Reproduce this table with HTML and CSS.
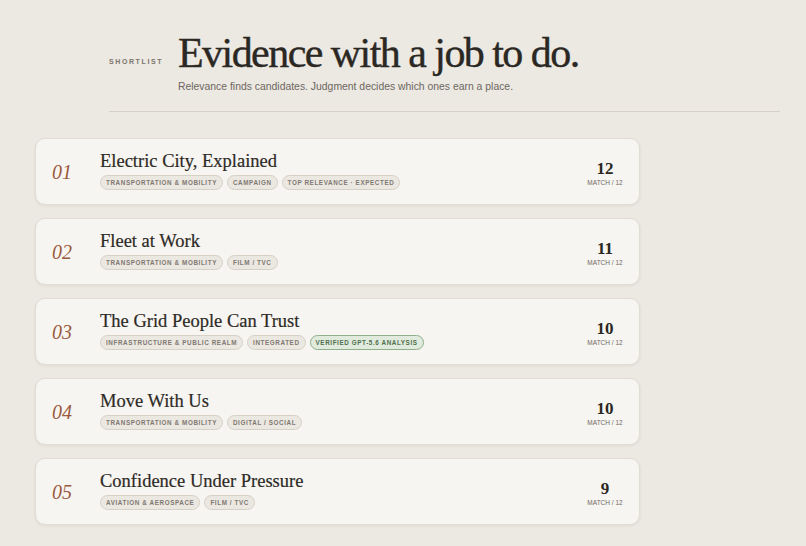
FILE: index.html
```html
<!DOCTYPE html>
<html>
<head>
<meta charset="utf-8">
<link rel="stylesheet" href="styles.css">
</head>
<body>
<main class="page">
  <header class="masthead">
    <div class="masthead-row">
      <span class="eyebrow">Shortlist</span>
      <div class="masthead-text">
        <h1 class="headline">Evidence with a job to do.</h1>
        <p class="dek">Relevance finds candidates. Judgment decides which ones earn a place.</p>
      </div>
    </div>
    <hr class="rule">
  </header>

  <ol class="shortlist">
    <li class="card">
      <span class="rank">01</span>
      <div class="card-body">
        <h2 class="card-title">Electric City, Explained</h2>
        <div class="tags">
          <span class="tag">Transportation &amp; Mobility</span>
          <span class="tag">Campaign</span>
          <span class="tag">Top relevance · expected</span>
        </div>
      </div>
      <div class="score"><span class="score-num">12</span><span class="score-label">Match / 12</span></div>
    </li>
    <li class="card">
      <span class="rank">02</span>
      <div class="card-body">
        <h2 class="card-title">Fleet at Work</h2>
        <div class="tags">
          <span class="tag">Transportation &amp; Mobility</span>
          <span class="tag">Film / TVC</span>
        </div>
      </div>
      <div class="score"><span class="score-num">11</span><span class="score-label">Match / 12</span></div>
    </li>
    <li class="card">
      <span class="rank">03</span>
      <div class="card-body">
        <h2 class="card-title">The Grid People Can Trust</h2>
        <div class="tags">
          <span class="tag">Infrastructure &amp; Public Realm</span>
          <span class="tag">Integrated</span>
          <span class="tag tag-verified">Verified GPT-5.6 analysis</span>
        </div>
      </div>
      <div class="score"><span class="score-num">10</span><span class="score-label">Match / 12</span></div>
    </li>
    <li class="card">
      <span class="rank">04</span>
      <div class="card-body">
        <h2 class="card-title">Move With Us</h2>
        <div class="tags">
          <span class="tag">Transportation &amp; Mobility</span>
          <span class="tag">Digital / Social</span>
        </div>
      </div>
      <div class="score"><span class="score-num">10</span><span class="score-label">Match / 12</span></div>
    </li>
    <li class="card">
      <span class="rank">05</span>
      <div class="card-body">
        <h2 class="card-title">Confidence Under Pressure</h2>
        <div class="tags">
          <span class="tag">Aviation &amp; Aerospace</span>
          <span class="tag">Film / TVC</span>
        </div>
      </div>
      <div class="score"><span class="score-num">9</span><span class="score-label">Match / 12</span></div>
    </li>
  </ol>
</main>
</body>
</html>
```

FILE: styles.css
```css
* { box-sizing: border-box; }

html, body {
  margin: 0;
  padding: 0;
  background: #ece8e2;
  height: 100%;
}

body {
  font-family: "Liberation Sans", Arial, sans-serif;
  color: #2b2824;
  overflow: hidden;
}

.page {
  padding: 30px 26px 0 35px;
}

.masthead {
  padding-left: 74px;
}

.masthead-row {
  display: flex;
  align-items: flex-start;
  gap: 20px;
}

.eyebrow {
  font-size: 7px;
  font-weight: 700;
  letter-spacing: 1.6px;
  text-transform: uppercase;
  color: #7b756d;
  width: 49px;
  margin-top: 28px;
}

.headline {
  margin: 0;
  font-family: "Liberation Serif", "Times New Roman", serif;
  font-weight: 400;
  font-size: 42px;
  line-height: 46px;
  letter-spacing: -1.55px;
  color: #2b2824;
  -webkit-text-stroke: 0.4px #2b2824;
}

.dek {
  margin: 4px 0 0;
  font-size: 10.4px;
  line-height: 14px;
  color: #6d675f;
}

.rule {
  border: 0;
  border-top: 1px solid #d7d1c8;
  margin: 17px 0 0;
}

.shortlist {
  list-style: none;
  margin: 26px 0 0;
  padding: 0;
  width: 605px;
  display: flex;
  flex-direction: column;
  gap: 13px;
}

.card {
  display: flex;
  align-items: center;
  height: 67px;
  background: #f7f5f1;
  border: 1px solid #e1dcd4;
  border-radius: 10px;
  box-shadow: 0 1px 3px rgba(80, 65, 45, 0.08);
  padding: 0 12px 0 16px;
}

.rank {
  width: 48px;
  font-family: "Liberation Serif", "Times New Roman", serif;
  font-style: italic;
  font-size: 20px;
  color: #9a5a3e;
  padding-top: 2px;
}

.card-body {
  flex: 1;
  display: flex;
  flex-direction: column;
  gap: 3px;
  margin-top: -3px;
}

.card-title {
  margin: 0;
  font-family: "Liberation Serif", "Times New Roman", serif;
  font-weight: 400;
  font-size: 18.5px;
  line-height: 22px;
  color: #2d2a26;
  -webkit-text-stroke: 0.2px #2d2a26;
}

.tags {
  display: flex;
  gap: 4px;
}

.tag {
  display: inline-flex;
  align-items: center;
  height: 15px;
  padding: 0 5px;
  border: 1px solid #d6d0c7;
  border-radius: 8px;
  background: #ebe7e1;
  font-size: 6.3px;
  font-weight: 700;
  letter-spacing: 0.6px;
  text-transform: uppercase;
  color: #7f7971;
}

.tag-verified {
  background: #e0ebdd;
  border-color: #8fae8c;
  color: #4f6f4d;
}

.score {
  width: 42px;
  display: flex;
  flex-direction: column;
  align-items: center;
  margin-right: 1px;
  padding-top: 4px;
}

.score-num {
  font-family: "Liberation Serif", "Times New Roman", serif;
  font-weight: 700;
  font-size: 17px;
  line-height: 18px;
  color: #2b2824;
}

.score-label {
  font-size: 6.5px;
  line-height: 10px;
  text-transform: uppercase;
  color: #6f6961;
  white-space: nowrap;
}
```
